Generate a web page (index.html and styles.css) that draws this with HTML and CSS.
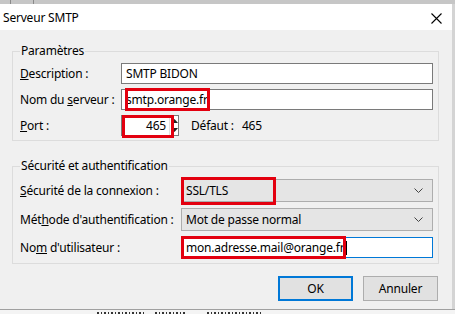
FILE: index.html
```html
<!DOCTYPE html>
<html lang="fr">
<head>
    <meta charset="UTF-8">
    <meta name="viewport" content="width=device-width, initial-scale=1.0">
    <title>Serveur SMTP</title>
    <link rel="stylesheet" href="styles.css">
</head>
<body>
    <div class="screen">
        <div class="top-strip"><span class="tick"></span><span class="tick"></span></div>

        <div class="window">
            <div class="dialog">
                <div class="titlebar">
                    <span class="title">Serveur SMTP</span>
                    <svg class="close" width="11" height="11" viewBox="0 0 11 11">
                        <path d="M0.5 0.5 L10.5 10.5 M10.5 0.5 L0.5 10.5" stroke="#000" stroke-width="1.1" fill="none"/>
                    </svg>
                </div>

                <div class="content">
                    <fieldset class="group group-params">
                        <legend>Paramètres</legend>
                        <div class="rows">
                            <label class="lbl"><u>D</u>escription :</label>
                            <div class="field">SMTP BIDON</div>

                            <label class="lbl">Nom du <u>s</u>erveur :</label>
                            <div class="field">
                                smtp.orange.fr
                                <span class="mark mark-server"></span>
                            </div>

                            <label class="lbl"><u>P</u>ort :</label>
                            <div class="port-line">
                                <div class="spin">
                                    <span class="spin-value">465</span>
                                    <span class="spin-arrows">
                                        <svg width="7" height="4" viewBox="0 0 7 4"><path d="M0 4 L3.5 0 L7 4 Z" fill="#222"/></svg>
                                        <svg width="7" height="4" viewBox="0 0 7 4"><path d="M0 0 L3.5 4 L7 0 Z" fill="#222"/></svg>
                                    </span>
                                    <span class="mark mark-port"></span>
                                </div>
                                <span class="default-lbl">Défaut :</span>
                                <span class="default-val">465</span>
                            </div>
                        </div>
                    </fieldset>

                    <fieldset class="group group-security">
                        <legend>Sécurité et authentification</legend>
                        <div class="rows">
                            <label class="lbl"><u>S</u>écurité de la connexion :</label>
                            <div class="combo">
                                <span>SSL/TLS</span>
                                <svg width="9" height="5" viewBox="0 0 9 5"><path d="M0.5 0.5 L4.5 4.5 L8.5 0.5" stroke="#444" stroke-width="1" fill="none"/></svg>
                                <span class="mark mark-ssl"></span>
                            </div>

                            <label class="lbl">Mét<u>h</u>ode d'authentification :</label>
                            <div class="combo">
                                <span>Mot de passe normal</span>
                                <svg width="9" height="5" viewBox="0 0 9 5"><path d="M0.5 0.5 L4.5 4.5 L8.5 0.5" stroke="#444" stroke-width="1" fill="none"/></svg>
                            </div>

                            <label class="lbl">No<u>m</u> d'utilisateur :</label>
                            <div class="field field-focus">
                                mon.adresse.mail@orange.fr<span class="caret"></span>
                                <span class="mark mark-user"></span>
                            </div>
                        </div>
                    </fieldset>

                    <div class="buttons">
                        <button class="btn btn-default">OK</button>
                        <button class="btn">Annuler</button>
                    </div>
                </div>
            </div>
            <div class="side-strip"></div>
        </div>

        <!-- window behind the dialog: only the tops of its letters show -->
        <div class="behind">
            <span class="scrap scrap-a"></span>
            <span class="scrap scrap-b"></span>
            <span class="scrap scrap-c"></span>
        </div>
    </div>
</body>
</html>
```

FILE: styles.css
```css
:root {
    --face: #f0f0f0;
    --frame: #dcdcdc;
    --field-border: #7a7a7a;
    --combo-bg: #e5e5e5;
    --combo-border: #adadad;
    --accent: #0078d7;
    --mark: #e3000f;
}

body {
    margin: 0;
    font-family: "Noto Sans", "Open Sans", sans-serif;
    font-size: 12px;
    letter-spacing: -0.2px;
    color: #000;
    background: #c8c8c8;
}

.screen {
    width: 455px;
    height: 314px;
    overflow: hidden;
    background: #c8c8c8;
}

.top-strip {
    height: 4px;
    background: #c6c6c6;
    display: flex;
    gap: 22px;
    padding-left: 10px;
}

.tick {
    width: 1px;
    background: #8a8a8a;
}

.window {
    display: flex;
}

.dialog {
    width: 452px;
    height: 305px;
    background: var(--face);
}

.side-strip {
    flex: 1;
    background: #d4d4d4;
}

.titlebar {
    height: 26px;
    background: #fff;
    display: flex;
    align-items: center;
    justify-content: space-between;
    padding: 0 10px 0 3px;
}

.title {
    line-height: 16px;
    margin-top: 1px;
}

.close {
    margin-top: 2px;
}

.content {
    padding: 13px 13px 0 12px;
}

.group {
    margin: 0;
    border: 1px solid var(--frame);
    padding: 4px 5px 4px 7px;
}

.group legend {
    padding: 0 1px;
    line-height: 16px;
}

.group-security {
    margin-top: 17px;
    padding-top: 5px;
    padding-bottom: 5px;
}

.rows {
    display: grid;
    align-items: center;
}

.group-params .rows {
    grid-template-columns: 101px 1fr;
    row-gap: 5px;
}

.group-security .rows {
    grid-template-columns: 161px 1fr;
    row-gap: 6px;
}

.lbl {
    line-height: 16px;
}

.field {
    position: relative;
    height: 21px;
    box-sizing: border-box;
    border: 1px solid var(--field-border);
    background: #fff;
    padding: 0 4px;
    display: flex;
    align-items: center;
}

.field-focus {
    border-color: var(--accent);
}

.caret {
    width: 1px;
    height: 14px;
    background: #000;
    margin-left: 1px;
}

.port-line {
    display: flex;
    align-items: center;
}

.spin {
    position: relative;
    width: 58px;
    height: 21px;
    box-sizing: border-box;
    border: 1px solid var(--field-border);
    background: #fff;
    display: flex;
    align-items: center;
}

.spin-value {
    flex: 1;
    text-align: right;
    padding-right: 3px;
}

.spin-arrows {
    width: 8px;
    align-self: stretch;
    display: flex;
    flex-direction: column;
    justify-content: space-around;
    align-items: center;
    border-left: 1px solid #e0e0e0;
}

.spin-arrows svg {
    display: block;
}

.default-lbl {
    margin-left: 12px;
}

.default-val {
    margin-left: 8px;
}

.combo {
    position: relative;
    height: 23px;
    box-sizing: border-box;
    border: 1px solid var(--combo-border);
    background: var(--combo-bg);
    padding: 0 9px 0 4px;
    display: flex;
    align-items: center;
    justify-content: space-between;
}

.mark {
    position: absolute;
    border: 3px solid var(--mark);
    box-sizing: border-box;
    pointer-events: none;
}

.mark-server {
    left: 3px;
    top: -2px;
    width: 85px;
    height: 23px;
}

.mark-port {
    left: 0;
    top: -1px;
    width: 52px;
    height: 23px;
}

.mark-ssl {
    left: -1px;
    top: -3px;
    width: 95px;
    height: 28px;
}

.mark-user {
    left: -1px;
    top: -2px;
    width: 165px;
    height: 23px;
}

.buttons {
    display: flex;
    justify-content: flex-end;
    gap: 10px;
    margin-top: 12px;
    padding-right: 1px;
}

.btn {
    width: 75px;
    height: 25px;
    font-family: inherit;
    font-size: 12px;
    letter-spacing: inherit;
    color: #000;
    background: #e1e1e1;
    border: 1px solid #adadad;
    border-radius: 0;
    padding: 0;
}

.btn-default {
    border: 2px solid var(--accent);
}

.behind {
    height: 4px;
    border-top: 1px solid #a0a0a0;
    background: #f4f4f4;
    display: flex;
    align-items: flex-end;
}

.scrap {
    height: 2px;
    background: repeating-linear-gradient(90deg, #333 0 2px, transparent 2px 4px, #333 4px 5px, transparent 5px 7px);
}

.scrap-a {
    width: 48px;
    margin-left: 97px;
}

.scrap-b {
    width: 30px;
    margin-left: 10px;
}

.scrap-c {
    width: 54px;
    margin-left: 22px;
}
```
